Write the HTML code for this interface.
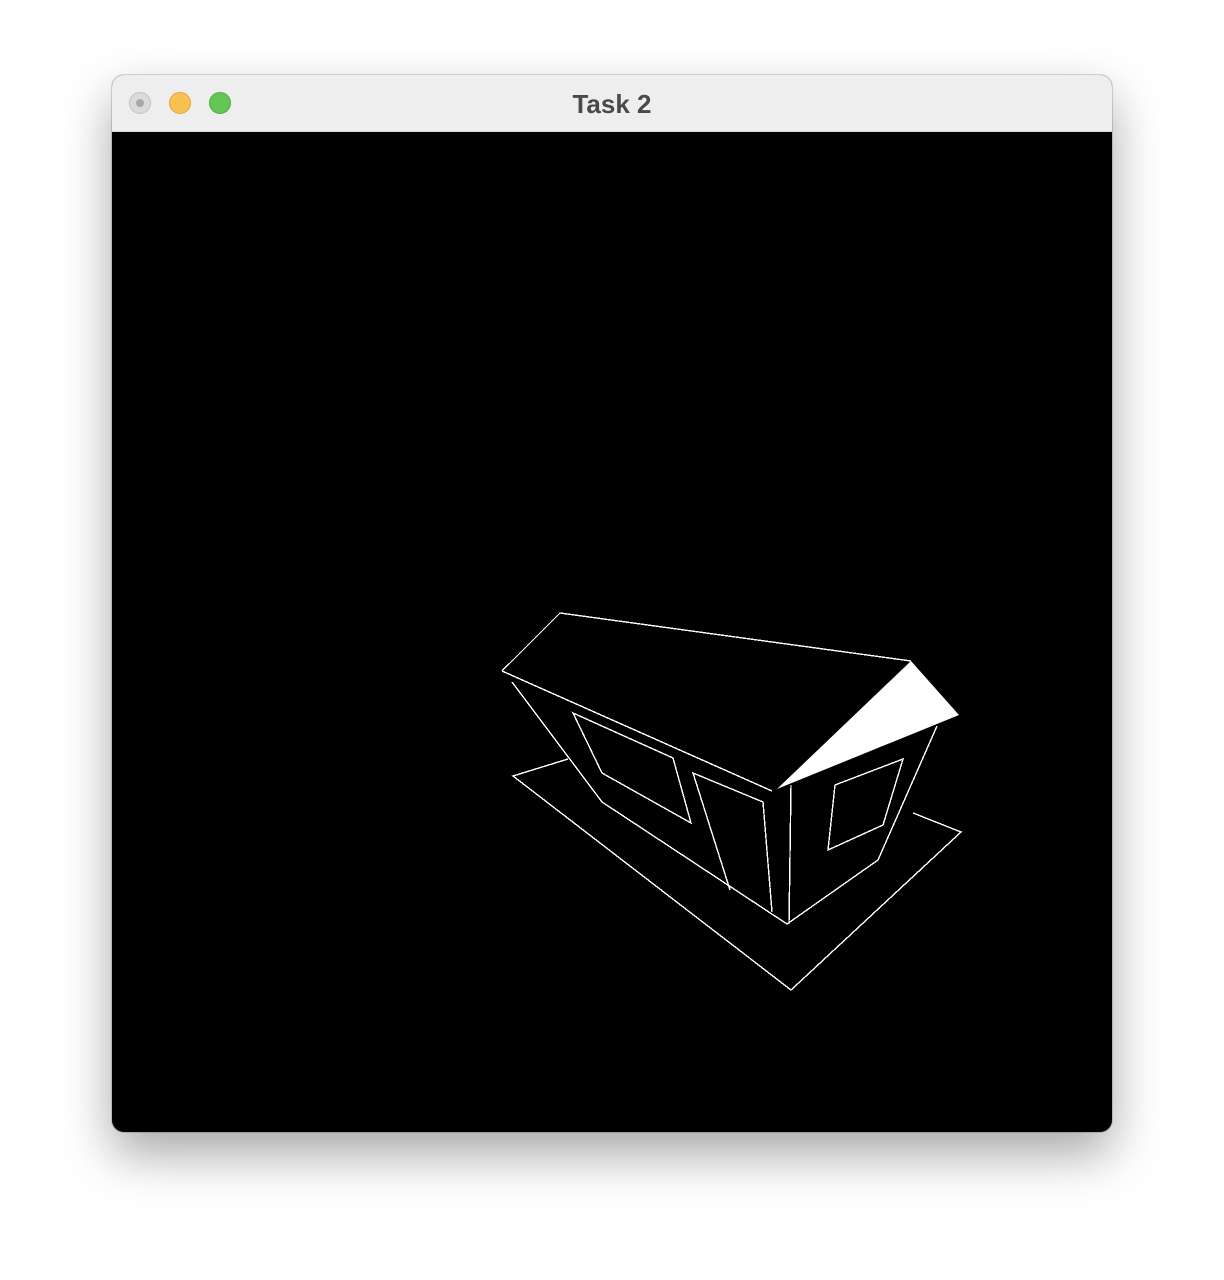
<!DOCTYPE html>
<html><head><meta charset="utf-8"><style>
html,body{margin:0;padding:0;width:1224px;height:1280px;background:#fff;overflow:hidden}
.win{position:absolute;left:112px;top:75px;width:1000px;height:1057px;border-radius:12px;overflow:hidden;background:#000;box-shadow:0 22px 50px rgba(0,0,0,0.35),0 0 0 1px rgba(0,0,0,0.15)}
.tb{position:absolute;left:0;top:0;width:1000px;height:56px;background:#eeeeee;border-bottom:1px solid #d8d8d8}
.t{position:absolute;left:0;right:0;top:14px;text-align:center;font:bold 26px "Liberation Sans",sans-serif;color:#4a4a4a}
.d{position:absolute;top:17px;width:22px;height:22px;border-radius:50%;box-sizing:border-box}
svg{position:absolute;left:0;top:0}
</style></head><body>
<div class="win">
<div class="tb">
<div class="d" style="left:17px;background:#dadada;border:1px solid #c2c2c2"><div style="position:absolute;left:6px;top:6px;width:8px;height:8px;border-radius:50%;background:#a8a8a8"></div></div>
<div class="d" style="left:57px;background:#f7c153;border:1px solid #dfa73c"></div>
<div class="d" style="left:97px;background:#62c554;border:1px solid #4fac42"></div>
<div class="t">Task 2</div>
</div>
</div>
<svg width="1224" height="1280" viewBox="0 0 1224 1280">
<g fill="none" stroke="#fff" stroke-width="1.4" shape-rendering="crispEdges">
<polyline points="502,671 560,613 911,661"/>
<line x1="502" y1="671" x2="772" y2="791"/>
<polyline points="512,682 602,802 787,924 878,860 937,726"/>
<line x1="791" y1="785" x2="789" y2="924"/>
<polyline points="730,890 693,773 763,802 772,912"/>
<polygon points="573,713 673,758 691,823 602,773"/>
<polygon points="835,785 903,759 883,825 828,850"/>
<polyline points="568,759 513,776 791,990 961,832 913,813"/>
</g>
<polygon points="911,661 959,715 777,789" fill="#fff"/>
</svg>
</body></html>
